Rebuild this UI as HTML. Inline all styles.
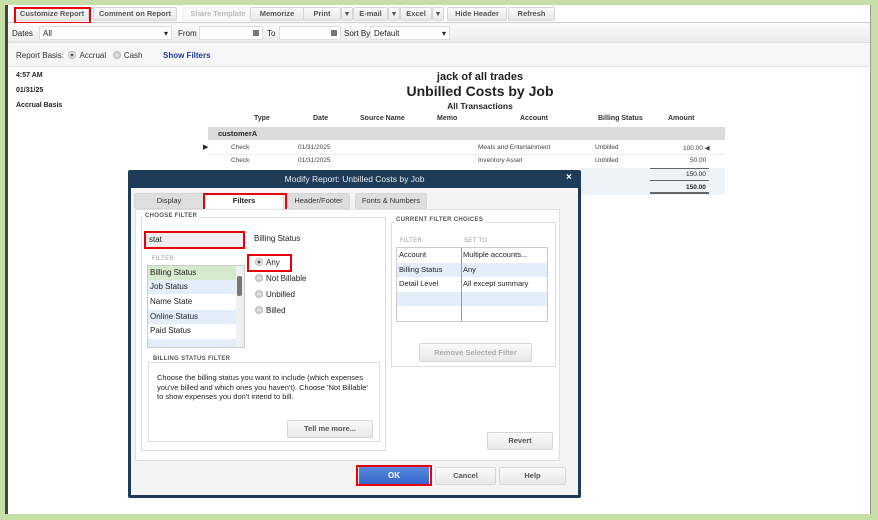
<!DOCTYPE html>
<html><head><style>
*{box-sizing:border-box;margin:0;padding:0}
body{width:878px;height:520px;background:#c6dfa6;font-family:"Liberation Sans",sans-serif;font-size:8px;color:#222;position:relative;overflow:hidden}
.a{position:absolute}
.btn{position:absolute;background:linear-gradient(#fafafa,#e8e8e8);border:1px solid #d6d6d6;border-radius:2px;font-weight:bold;color:#555;text-align:center;font-size:7.5px}
.red{position:absolute;border:2px solid #e8000b}
.gl{position:absolute;font-size:6px;font-weight:bold;color:#555;letter-spacing:.3px}
.row{position:absolute;left:0;right:0;height:14px;padding-left:2px;line-height:14px}
.rd{display:inline-block;width:8px;height:8px;border-radius:50%;background:radial-gradient(#e8e8e8,#c4c4c4);border:1px solid #bbb;vertical-align:-1px;margin-right:3px}
.rd.on{background:radial-gradient(#555 30%,#eee 40%)}
</style></head><body>
<div class="a" style="left:5px;top:5px;width:866px;height:509px;background:#fff;border-left:3px solid #444;border-right:1px solid #999"></div>
<!-- toolbar -->
<div class="a" style="left:8px;top:22px;width:862px;height:1px;background:#ccc"></div>
<div class="btn" style="left:15px;top:7px;width:74px;height:14px;line-height:12px">Customize Report</div>
<div class="red" style="left:14px;top:7px;width:77px;height:17px"></div>
<div class="btn" style="left:93px;top:7px;width:84px;height:14px;line-height:12px">Comment on Report</div>
<div class="btn" style="left:182px;top:7px;width:72px;height:14px;line-height:12px;color:#bbb;border-color:#f0f0f0;background:#f8f8f8">Share Template</div>
<div class="btn" style="left:250px;top:7px;width:54px;height:14px;line-height:12px">Memorize</div>
<div class="btn" style="left:303px;top:7px;width:38px;height:14px;line-height:12px">Print</div>
<div class="btn" style="left:341px;top:7px;width:12px;height:14px;line-height:12px">▾</div>
<div class="btn" style="left:353px;top:7px;width:35px;height:14px;line-height:12px">E-mail</div>
<div class="btn" style="left:388px;top:7px;width:12px;height:14px;line-height:12px">▾</div>
<div class="btn" style="left:400px;top:7px;width:32px;height:14px;line-height:12px">Excel</div>
<div class="btn" style="left:432px;top:7px;width:12px;height:14px;line-height:12px">▾</div>
<div class="btn" style="left:447px;top:7px;width:60px;height:14px;line-height:12px">Hide Header</div>
<div class="btn" style="left:508px;top:7px;width:47px;height:14px;line-height:12px">Refresh</div>
<!-- dates row -->
<div class="a" style="left:8px;top:23px;width:862px;height:20px;background:linear-gradient(#fbfbfb,#ececec);border-bottom:1px solid #ddd"></div>
<div class="a" style="left:12px;top:29px">Dates</div>
<div class="a" style="left:39px;top:26px;width:133px;height:14px;background:#fff;border:1px solid #ddd;padding:2px 3px">All<span style="float:right">▾</span></div>
<div class="a" style="left:178px;top:29px">From</div>
<div class="a" style="left:199px;top:26px;width:64px;height:14px;background:#fff;border:1px solid #ddd"><span style="float:right;background:#777;width:6px;height:6px;margin:3px"></span></div>
<div class="a" style="left:267px;top:29px">To</div>
<div class="a" style="left:279px;top:26px;width:62px;height:14px;background:#fff;border:1px solid #ddd"><span style="float:right;background:#777;width:6px;height:6px;margin:3px"></span></div>
<div class="a" style="left:344px;top:29px">Sort By</div>
<div class="a" style="left:370px;top:26px;width:80px;height:14px;background:#fff;border:1px solid #ddd;padding:2px 3px">Default<span style="float:right">▾</span></div>
<!-- basis row -->
<div class="a" style="left:8px;top:44px;width:862px;height:23px;background:#f6f6f6;border-bottom:1px solid #e4e4e4"></div>
<div class="a" style="left:16px;top:51px;color:#333">Report Basis: &nbsp;<span class="rd on"></span>Accrual &nbsp; <span class="rd"></span>Cash</div>
<div class="a" style="left:163px;top:51px;color:#23389a;font-weight:bold">Show Filters</div>
<!-- report -->
<div class="a" style="left:16px;top:72px;font-size:7px;font-weight:bold">4:57 AM</div>
<div class="a" style="left:16px;top:87px;font-size:7px;font-weight:bold">01/31/25</div>
<div class="a" style="left:16px;top:102px;font-size:7px;font-weight:bold">Accrual Basis</div>
<div class="a" style="left:380px;top:71px;width:200px;text-align:center;font-size:11px;font-weight:bold">jack of all trades</div>
<div class="a" style="left:360px;top:83px;width:240px;text-align:center;font-size:14px;font-weight:bold">Unbilled Costs by Job</div>
<div class="a" style="left:380px;top:101px;width:200px;text-align:center;font-size:8.5px;font-weight:bold">All Transactions</div>
<div class="a" style="left:208px;top:113px;width:517px;height:13px;font-weight:bold;font-size:7px;color:#333">
<span class="a" style="left:46px;top:2px">Type</span><span class="a" style="left:105px;top:2px">Date</span><span class="a" style="left:152px;top:2px">Source Name</span><span class="a" style="left:229px;top:2px">Memo</span><span class="a" style="left:312px;top:2px">Account</span><span class="a" style="left:390px;top:2px">Billing Status</span><span class="a" style="left:460px;top:2px">Amount</span></div>
<div class="a" style="left:208px;top:127px;width:517px;height:13px;background:#dcdcdc;font-weight:bold;padding:2px 10px;font-size:7.5px">customerA</div>
<div class="a" style="left:203px;top:143px;font-size:7px">▶</div>
<div class="a" style="left:208px;top:141px;width:517px;height:27px;font-size:6.5px;color:#444">
<span class="a" style="left:23px;top:3px">Check</span><span class="a" style="left:90px;top:3px">01/31/2025</span><span class="a" style="left:270px;top:3px">Meals and Entertainment</span><span class="a" style="left:387px;top:3px">Unbilled</span><span class="a" style="left:475px;top:3px">100.00 ◀</span>
<span class="a" style="left:23px;top:16px">Check</span><span class="a" style="left:90px;top:16px">01/31/2025</span><span class="a" style="left:270px;top:16px">Inventory Asset</span><span class="a" style="left:387px;top:16px">Unbilled</span><span class="a" style="left:482px;top:16px">50.00</span>
<div class="a" style="left:0;top:13px;width:517px;height:1px;background:#eee"></div></div>
<div class="a" style="left:580px;top:168px;width:145px;height:27px;background:#eef3f8;font-size:6.5px">
<div class="a" style="left:70px;top:0;width:59px;height:1px;background:#666"></div>
<span class="a" style="left:106px;top:3px">150.00</span>
<div class="a" style="left:70px;top:12px;width:59px;height:1px;background:#666"></div>
<span class="a" style="left:106px;top:16px;font-weight:bold">150.00</span>
<div class="a" style="left:70px;top:24px;width:59px;height:2px;background:#666"></div></div>
<!-- dialog -->
<div class="a" style="left:128px;top:170px;width:453px;height:328px;background:#1e3b58;border-radius:2px"></div>
<div class="a" style="left:128px;top:174px;width:453px;text-align:center;color:#e8eef4;font-size:8.5px">Modify Report: Unbilled Costs by Job</div>
<div class="a" style="left:566px;top:172px;color:#fff;font-weight:bold;font-size:10px">×</div>
<div class="a" style="left:131px;top:188px;width:447px;height:307px;background:#f4f4f4"></div>
<div class="btn" style="left:134px;top:193px;width:70px;height:16px;line-height:14px;background:#dedede;color:#333;font-weight:normal">Display</div>
<div class="btn" style="left:204px;top:193px;width:80px;height:17px;line-height:14px;background:#fff;font-weight:bold;color:#222">Filters</div>
<div class="red" style="left:203px;top:193px;width:84px;height:19px"></div>
<div class="btn" style="left:287px;top:193px;width:63px;height:16px;line-height:14px;background:#dedede;color:#333;font-weight:normal">Header/Footer</div>
<div class="btn" style="left:355px;top:193px;width:72px;height:16px;line-height:14px;background:#dedede;color:#333;font-weight:normal">Fonts &amp; Numbers</div>
<div class="a" style="left:135px;top:209px;width:425px;height:252px;background:#fff;border:1px solid #e0e0e0"></div>
<div class="a" style="left:141px;top:217px;width:245px;height:234px;border:1px solid #ddd"></div>
<div class="gl" style="left:143px;top:213px;background:#fff;padding:0 2px">CHOOSE FILTER</div>
<div class="a" style="left:145px;top:232px;width:98px;height:16px;background:#eee;padding:3px 4px">stat</div>
<div class="red" style="left:144px;top:231px;width:101px;height:18px"></div>
<div class="gl" style="left:152px;top:256px;font-weight:normal;color:#999">FILTER</div>
<div class="a" style="left:147px;top:265px;width:98px;height:83px;border:1px solid #ccc;background:#fff;overflow:hidden">
<div class="row" style="top:0;background:#d6ebcd">Billing Status</div>
<div class="row" style="top:14px;background:#e4eefa">Job Status</div>
<div class="row" style="top:29px">Name State</div>
<div class="row" style="top:44px;background:#e4eefa">Online Status</div>
<div class="row" style="top:58px">Paid Status</div>
<div class="row" style="top:73px;background:#e4eefa;height:10px"></div>
<div class="a" style="right:0;top:0;width:8px;height:83px;background:#f0f0f0"><div class="a" style="left:1px;top:10px;width:5px;height:20px;background:#777;border-radius:2px"></div></div></div>
<div class="a" style="left:254px;top:234px;font-size:8px">Billing Status</div>
<div class="a" style="left:255px;top:258px;font-size:8px"><span class="rd on"></span>Any</div>
<div class="red" style="left:247px;top:254px;width:45px;height:18px"></div>
<div class="a" style="left:255px;top:274px"><span class="rd"></span>Not Billable</div>
<div class="a" style="left:255px;top:290px"><span class="rd"></span>Unbilled</div>
<div class="a" style="left:255px;top:306px"><span class="rd"></span>Billed</div>
<div class="a" style="left:148px;top:362px;width:232px;height:80px;border:1px solid #ddd"></div>
<div class="gl" style="left:151px;top:356px;background:#fff;padding:0 2px">BILLING STATUS FILTER</div>
<div class="a" style="left:157px;top:373px;width:214px;font-size:7.5px;line-height:9.5px">Choose the billing status you want to include (which expenses you've billed and which ones you haven't). Choose 'Not Billable' to show expenses you don't intend to bill.</div>
<div class="btn" style="left:287px;top:420px;width:86px;height:18px;line-height:16px">Tell me more...</div>
<div class="a" style="left:391px;top:222px;width:165px;height:145px;border:1px solid #ddd"></div>
<div class="gl" style="left:394px;top:217px;background:#fff;padding:0 2px">CURRENT FILTER CHOICES</div>
<div class="gl" style="left:400px;top:238px;font-weight:normal;color:#999">FILTER</div>
<div class="gl" style="left:464px;top:238px;font-weight:normal;color:#999">SET TO</div>
<div class="a" style="left:396px;top:247px;width:152px;height:75px;border:1px solid #ccc;font-size:7.5px;overflow:hidden">
<div class="row" style="top:0">Account<span class="a" style="left:66px">Multiple accounts...</span></div>
<div class="row" style="top:15px;background:#e4eefa">Billing Status<span class="a" style="left:66px">Any</span></div>
<div class="row" style="top:29px">Detail Level<span class="a" style="left:66px">All except summary</span></div>
<div class="row" style="top:44px;background:#e4eefa"></div>
<div class="a" style="left:64px;top:0;width:1px;height:75px;background:#999"></div></div>
<div class="btn" style="left:419px;top:343px;width:113px;height:19px;line-height:17px;color:#aaa">Remove Selected Filter</div>
<div class="btn" style="left:487px;top:432px;width:66px;height:18px;line-height:16px">Revert</div>
<div class="a" style="left:359px;top:467px;width:70px;height:17px;background:linear-gradient(#5b8ae0,#3565c8);color:#fff;font-weight:bold;text-align:center;line-height:17px">OK</div>
<div class="red" style="left:356px;top:465px;width:76px;height:21px"></div>
<div class="btn" style="left:435px;top:467px;width:61px;height:18px;line-height:16px">Cancel</div>
<div class="btn" style="left:499px;top:467px;width:67px;height:18px;line-height:16px">Help</div>
</body></html>
